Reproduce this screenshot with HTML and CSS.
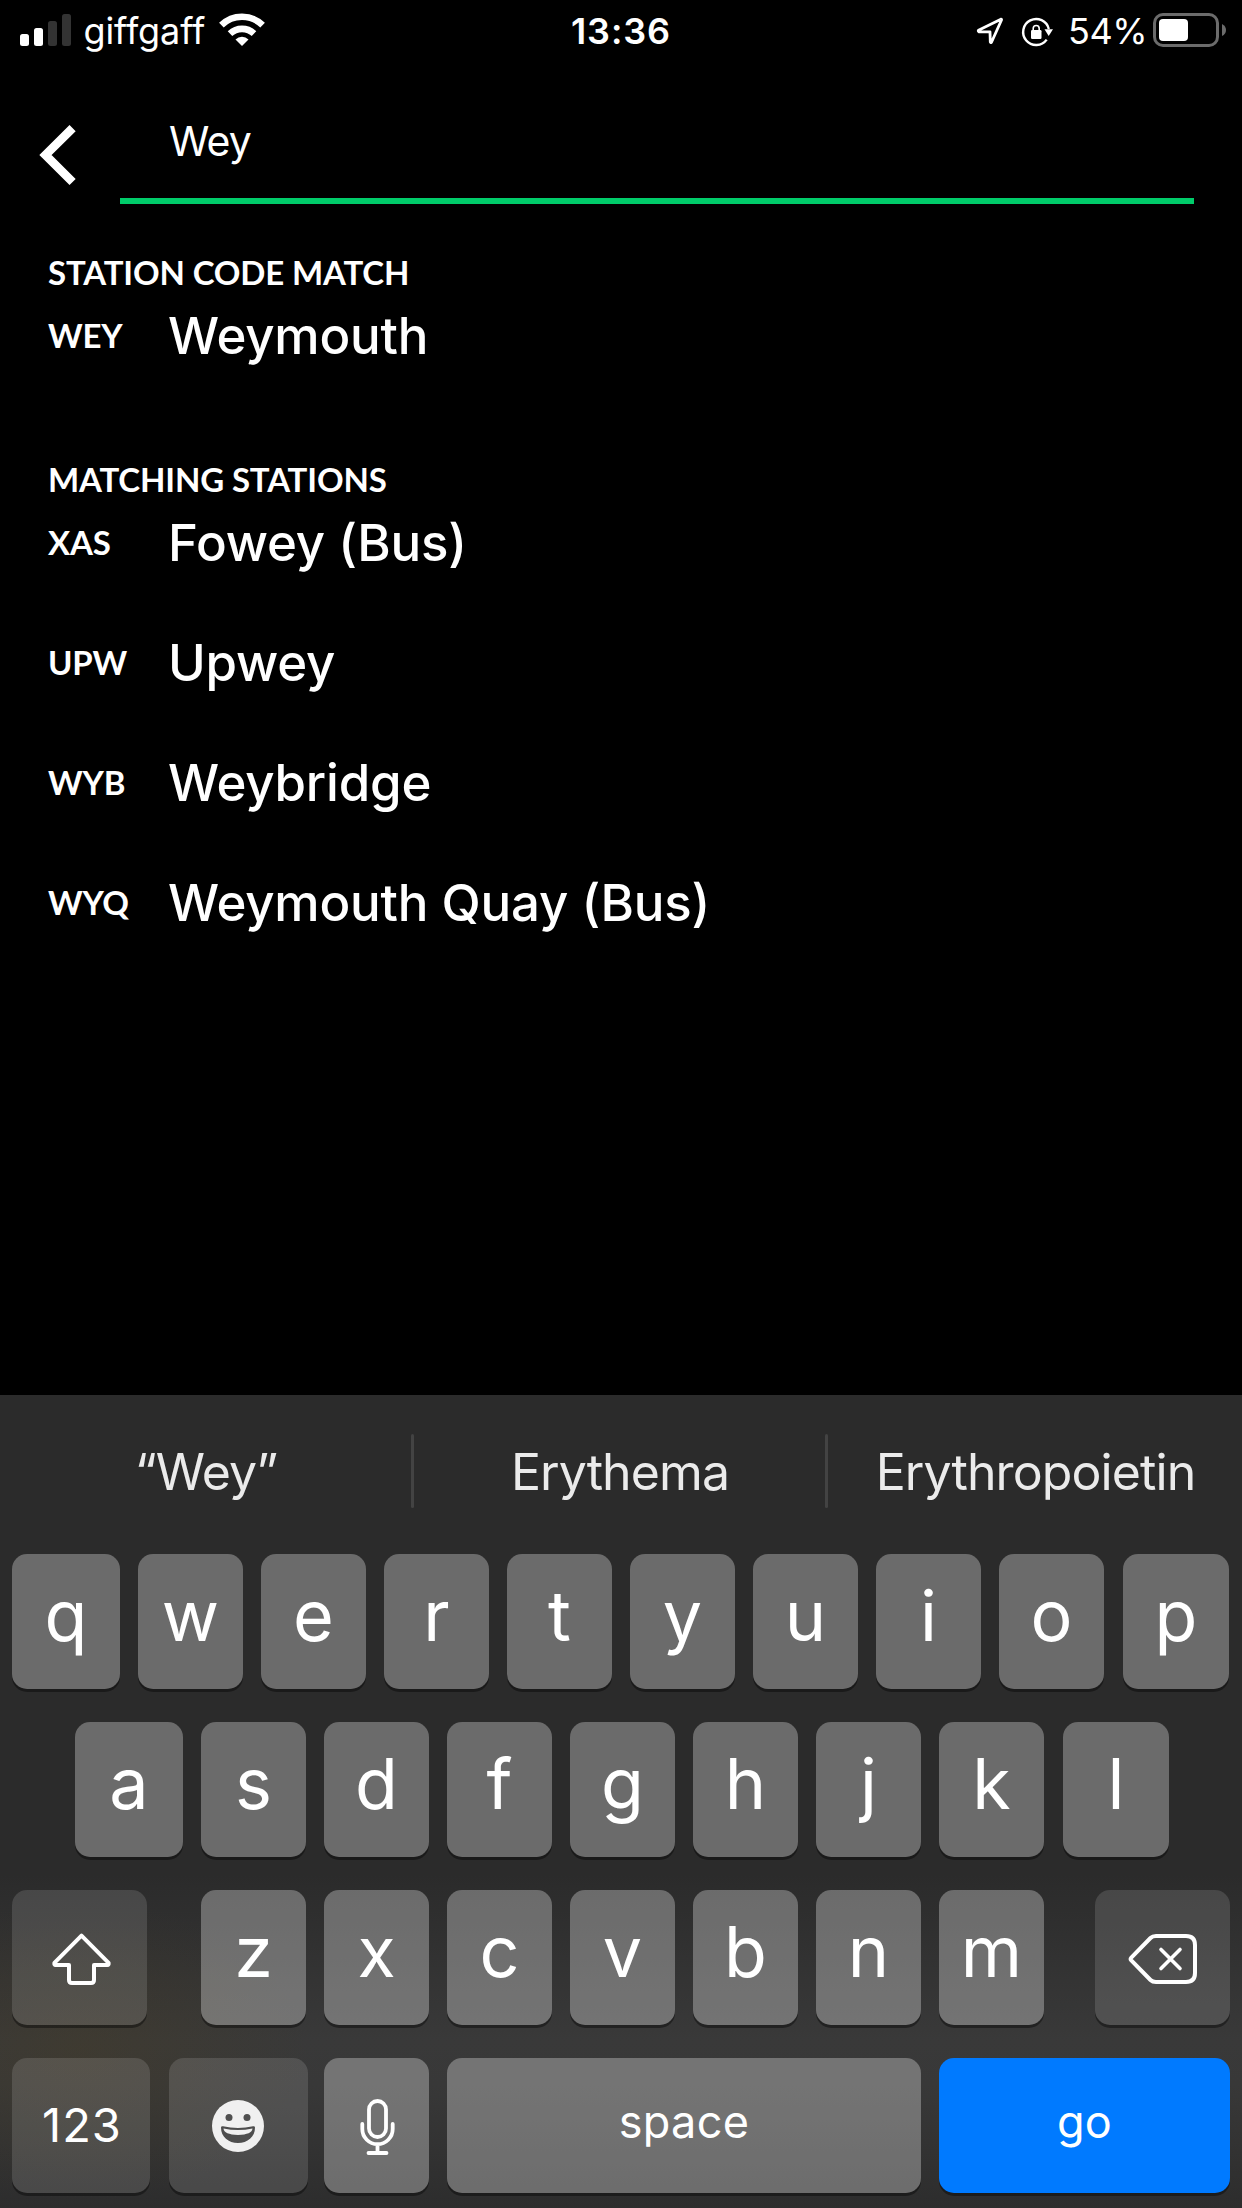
FILE: index.html
```html
<!DOCTYPE html>
<html lang="en">
<head>
<meta charset="utf-8">
<title>Station search</title>
<link rel="stylesheet" href="styles.css">
</head>
<body>
<div class="screen">
  <header class="status">
    <div class="status-left">
      <svg class="signal" viewBox="20 0 51 62" width="51" height="62">
        <rect x="20" y="34" width="9" height="12" rx="2.5" fill="#fff"/>
        <rect x="34" y="28" width="9" height="18" rx="2.5" fill="#fff"/>
        <rect x="48" y="21" width="9" height="25" rx="2.5" fill="#333"/>
        <rect x="62" y="14" width="9" height="32" rx="2.5" fill="#333"/>
      </svg>
      <span class="carrier">giffgaff</span>
      <svg class="wifi" viewBox="219 0 46 62" width="46" height="62">
        <g fill="none" stroke="#fff" stroke-width="6.6">
          <path d="M221.4 25.2A29.5 29.5 0 0 1 262.6 25.2"/>
          <path d="M230 33.6A17.5 17.5 0 0 1 254 33.6"/>
        </g>
        <path d="M242 46L235.5 39.4A9.2 9.2 0 0 1 248.500 39.4Z" fill="#fff"/>
      </svg>
    </div>
    <time class="clock">13:36</time>
    <div class="status-right">
      <svg viewBox="975 0 80 62" width="80" height="62">
        <path d="M978.500 30.300L1000.900 19.200Q1001.800 19 1001.500 20L991.500 42.300Q990.500 43 990.300 42L990 31.800H979Q977.800 31 978.500 30.300Z" fill="none" stroke="#fff" stroke-width="2.800" stroke-linejoin="round"/>
        <path d="M1046.700 39.600A13 13 0 1 1 1048.800 29" fill="none" stroke="#fff" stroke-width="2.400"/>
        <path d="M1044.500 29.300H1053L1048.700 36Z" fill="#fff"/>
        <rect x="1031" y="30" width="10.500" height="9" rx="1.200" fill="#fff"/>
        <path d="M1033.200 31V28.500a3 3 0 0 1 6 0V31" fill="none" stroke="#fff" stroke-width="1.600"/>
      </svg>
      <span class="percent">54%</span>
      <svg viewBox="1153 0 73 62" width="73" height="62">
        <rect x="1154.500" y="14.500" width="63" height="31" rx="8.500" fill="none" stroke="#6b6b6b" stroke-width="3"/>
        <rect x="1159" y="19" width="29" height="22" rx="4" fill="#fff"/>
        <path d="M1222 24Q1226 26 1226 30T1222 36Z" fill="#6b6b6b"/>
      </svg>
    </div>
  </header>

  <div class="search">
    <svg class="back" viewBox="39 120 38 70" width="38" height="70">
      <path d="M72.600 128.100L45.500 155L72.600 182" fill="none" stroke="#fff" stroke-width="8.700"/>
    </svg>
    <div class="field">Wey</div>
  </div>

  <main class="results">
    <section>
      <h2>STATION CODE MATCH</h2>
      <ul>
        <li><span class="code">WEY</span><span class="name">Weymouth</span></li>
      </ul>
    </section>
    <section>
      <h2>MATCHING STATIONS</h2>
      <ul>
        <li><span class="code">XAS</span><span class="name">Fowey (Bus)</span></li>
        <li><span class="code">UPW</span><span class="name">Upwey</span></li>
        <li><span class="code">WYB</span><span class="name">Weybridge</span></li>
        <li><span class="code">WYQ</span><span class="name">Weymouth Quay (Bus)</span></li>
      </ul>
    </section>
  </main>

  <div class="keyboard">
    <div class="suggestions">
      <span>“Wey”</span><i></i><span>Erythema</span><i></i><span>Erythropoietin</span>
    </div>
    <div class="row">
      <b class="key first">q</b><b class="key">w</b><b class="key">e</b><b class="key">r</b><b class="key">t</b><b class="key">y</b><b class="key">u</b><b class="key">i</b><b class="key">o</b><b class="key last">p</b>
    </div>
    <div class="row row-home">
      <b class="key first">a</b><b class="key">s</b><b class="key">d</b><b class="key">f</b><b class="key">g</b><b class="key">h</b><b class="key">j</b><b class="key">k</b><b class="key last">l</b>
    </div>
    <div class="row">
      <b class="key dark shift"><svg viewBox="12 1890 135 135">
        <path d="M81.500 1935.700L54.400 1962.800Q54 1965 55.700 1965H69V1980Q69 1983 72 1983H91Q94 1983 94 1980V1965H107.300Q109 1965 108.600 1962.800Z" fill="none" stroke="#fff" stroke-width="4" stroke-linejoin="round"/>
      </svg></b>
      <b class="key">z</b><b class="key">x</b><b class="key">c</b><b class="key">v</b><b class="key">b</b><b class="key">n</b><b class="key">m</b>
      <b class="key dark delete"><svg viewBox="1095 1890 135 135">
        <g fill="none" stroke="#fff" stroke-width="4" stroke-linejoin="round" stroke-linecap="round">
          <path d="M1131.300 1957.600L1150.500 1938Q1152.500 1936 1156 1936H1186Q1195 1936 1195 1945V1973Q1195 1982 1186 1982H1156Q1152.500 1982 1150.500 1980L1131.300 1960.400Q1130 1959 1131.300 1957.600Z"/>
          <path d="M1161 1949.500L1180 1968.500M1180 1949.500L1161 1968.500" stroke-width="3.600"/>
        </g>
      </svg></b>
    </div>
    <div class="row">
      <b class="key dark numbers">123</b>
      <b class="key dark emoji"><svg viewBox="169 2058 139 135">
        <circle cx="238" cy="2126" r="26" fill="#f0f0f0"/>
        <circle cx="229" cy="2117.500" r="3.500" fill="#505050"/>
        <circle cx="247" cy="2117.500" r="3.500" fill="#505050"/>
        <path d="M221 2127.500Q221 2126 223 2126.300Q238 2129.500 253 2126.300Q255 2126 255 2127.500C255 2137 247.500 2143 238 2143S221 2137 221 2127.500Z" fill="#4e4e4e"/>
        <path d="M223.500 2128.500Q238 2131.500 252.500 2128.500Q252 2134.500 238 2135Q224 2134.500 223.500 2128.500Z" fill="#f0f0f0"/>
      </svg></b>
      <b class="key mic"><svg viewBox="324 2058 105 135">
        <g fill="none" stroke="#fff" stroke-width="3.800" stroke-linecap="round">
          <rect x="369" y="2101" width="17" height="36" rx="8.500"/>
          <path d="M362.300 2124V2129A15.200 15.200 0 0 0 392.700 2129V2124M377.500 2144.500V2153M368.500 2153H386.500"/>
        </g>
      </svg></b>
      <b class="key space">space</b>
      <b class="key go">go</b>
    </div>
  </div>
</div>
</body>
</html>
```
FILE: styles.css
```css
* { box-sizing: border-box; }

body {
  margin: 0;
  background: #000;
  color: #fff;
  font-family: Inter, "Liberation Sans", sans-serif;
}

svg { display: block; flex: none; }

.screen {
  display: flex;
  flex-direction: column;
  width: 1242px;
  height: 2208px;
  overflow: hidden;
}

/* Status bar */
.status {
  display: grid;
  grid-template-columns: 1fr auto 1fr;
  height: 62px;
  padding: 0 16px 0 20px;
  font-size: 36px;
  line-height: 62px;
}
.status-left, .status-right { display: flex; }
.status-right { justify-content: flex-end; }
.carrier { width: 136px; margin-left: 12.5px; letter-spacing: -0.1px; }
.wifi { margin-left: -0.5px; }
.clock { margin-right: 4px; font-weight: 600; letter-spacing: 0.9px; }
.percent { width: 85px; margin-left: 13px; letter-spacing: -0.4px; }

/* Search field */
.search {
  display: flex;
  height: 142px;
  padding: 58px 48px 0 39px;
}
.field {
  flex: 1;
  height: 84px;
  margin-left: 43px;
  padding-left: 49px;
  border-bottom: 6px solid #00cc6a;
  font-size: 41px;
  line-height: 43px;
  letter-spacing: -0.8px;
}

/* Results */
.results {
  flex: 1;
  display: flex;
  flex-direction: column;
  gap: 95px;
  padding: 49px 48px 0;
}
.results h2 {
  height: 36px;
  margin: 0 0 16px;
  font: 700 33px/38px Lato, "Open Sans", sans-serif;
  letter-spacing: -0.15px;
}
.results ul {
  display: flex;
  flex-direction: column;
  gap: 60px;
  margin: 0;
  padding: 0;
  list-style: none;
}
.results li { display: flex; height: 60px; }
.code {
  width: 120px;
  font: 700 33px/60px Lato, "Open Sans", sans-serif;
  letter-spacing: -0.2px;
}
.name {
  font-size: 51px;
  font-weight: 500;
  line-height: 62px;
  letter-spacing: -0.2px;
}

/* Keyboard */
.keyboard {
  display: flex;
  flex-direction: column;
  gap: 33px;
  height: 813px;
  background:
    radial-gradient(ellipse 230px 150px at 80px 655px, rgba(76, 62, 28, 0.28), rgba(76, 62, 28, 0)),
    linear-gradient(#2b2b2b 0, #2b2b2b 480px, #393939 645px, #383838 690px, #2d2d2d 813px);
}
.suggestions {
  display: grid;
  grid-template-columns: 411px 3px 411px 3px 1fr;
  height: 126px;
  color: #ebebeb;
  font-size: 50px;
  line-height: 154px;
  letter-spacing: -0.9px;
}
.suggestions span { padding-left: 1px; text-align: center; }
.suggestions i {
  height: 74px;
  margin-top: 39px;
  border-radius: 2px;
  background: #434343;
}
.row {
  display: flex;
  gap: 18px;
  height: 135px;
  padding-left: 12px;
}
.row-home { padding-left: 75px; }
.key {
  flex: none;
  width: 105px;
  height: 135px;
  border-radius: 15px;
  background: rgba(255, 255, 255, 0.302);
  box-shadow: 0 3px 0 rgba(0, 0, 0, 0.38);
  font-size: 70px;
  font-weight: 400;
  line-height: 123px;
  text-align: center;
}
.key svg { width: 100%; height: 100%; }
.first { width: 108px; }
.last { width: 106px; margin-left: 1px; }
.dark { background: rgba(255, 255, 255, 0.128); }
.shift { width: 135px; margin-right: 36px; }
.delete { width: 135px; margin-left: 33px; }
.numbers {
  width: 138px;
  padding-left: 2px;
  font-size: 47px;
  line-height: 134px;
  letter-spacing: 1px;
}
.emoji { width: 139px; margin: 0 -2px 0 1px; }
.space, .go { font-size: 45px; line-height: 127px; letter-spacing: 0.3px; }
.space { width: 474px; }
.go { width: 291px; background: #007aff; }
```
